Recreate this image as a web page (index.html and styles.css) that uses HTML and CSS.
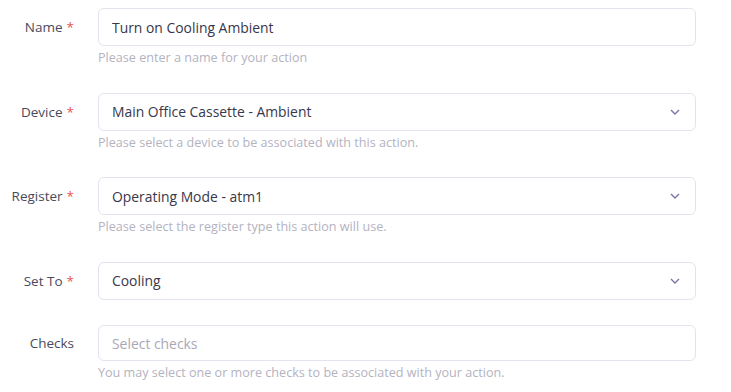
FILE: index.html
```html
<!DOCTYPE html>
<html>
<head>
    <title>New Action</title>
    <link rel="stylesheet" href="styles.css">
</head>
<body>
    <form class="action-form">
        <div class="row">
            <label class="label" for="name">Name <span class="req">*</span></label>
            <div class="field">
                <input class="input" type="text" id="name" value="Turn on Cooling Ambient">
                <div class="help">Please enter a name for your action</div>
            </div>
        </div>

        <div class="row">
            <label class="label">Device <span class="req">*</span></label>
            <div class="field">
                <div class="input select">
                    <span>Main Office Cassette - Ambient</span>
                    <svg class="chevron" width="10" height="6" viewBox="0 0 10 6"><path d="M1 1l4 4 4-4" fill="none" stroke="#7a74a8" stroke-width="1.4"/></svg>
                </div>
                <div class="help">Please select a device to be associated with this action.</div>
            </div>
        </div>

        <div class="row">
            <label class="label">Register <span class="req">*</span></label>
            <div class="field">
                <div class="input select">
                    <span>Operating Mode - atm1</span>
                    <svg class="chevron" width="10" height="6" viewBox="0 0 10 6"><path d="M1 1l4 4 4-4" fill="none" stroke="#7a74a8" stroke-width="1.4"/></svg>
                </div>
                <div class="help">Please select the register type this action will use.</div>
            </div>
        </div>

        <div class="row">
            <label class="label">Set To <span class="req">*</span></label>
            <div class="field">
                <div class="input select">
                    <span>Cooling</span>
                    <svg class="chevron" width="10" height="6" viewBox="0 0 10 6"><path d="M1 1l4 4 4-4" fill="none" stroke="#7a74a8" stroke-width="1.4"/></svg>
                </div>
            </div>
        </div>

        <div class="row">
            <label class="label label-multi">Checks</label>
            <div class="field">
                <div class="input select multi">
                    <span class="placeholder">Select checks</span>
                </div>
                <div class="help">You may select one or more checks to be associated with your action.</div>
            </div>
        </div>
    </form>
</body>
</html>
```

FILE: styles.css
```css
body {
    margin: 0;
    background: #ffffff;
    font-family: 'Open Sans', 'Noto Sans', sans-serif;
    color: #3b3a4e;
}
.action-form {
    padding: 8px 35px 0 0;
    display: flex;
    flex-direction: column;
    gap: 25.5px;
}
.row {
    display: grid;
    grid-template-columns: 74px 1fr;
    column-gap: 24px;
    align-items: start;
}
.label {
    height: 38px;
    display: flex;
    align-items: center;
    justify-content: flex-end;
    font-size: 13.5px;
    color: #4a4a5c;
    white-space: nowrap;
}
.label-multi {
    height: 36px;
}
.req {
    color: #ea5455;
    margin-left: 4px;
}
.input {
    box-sizing: border-box;
    width: 100%;
    height: 38px;
    border: 1px solid #e3e2ee;
    border-radius: 6px;
    padding: 0 13px;
    font-family: inherit;
    font-size: 13.9px;
    color: #38374b;
    background: #fff;
    outline: none;
}
.select {
    display: flex;
    align-items: center;
    justify-content: space-between;
}
.multi {
    height: 36px;
}
.chevron {
    margin-right: 2px;
}
.placeholder {
    color: #a9a8b6;
}
.help {
    font-size: 12.6px;
    color: #b4b3bf;
    margin-top: 2px;
    line-height: 19px;
}
```
